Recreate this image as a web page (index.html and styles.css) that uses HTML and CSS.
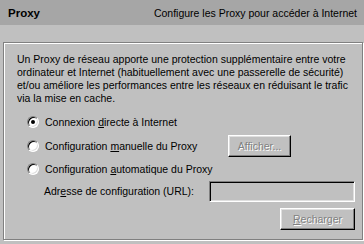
FILE: index.html
```html
<!DOCTYPE html>
<html lang="fr">
<head>
<meta charset="utf-8">
<link rel="stylesheet" href="styles.css">
</head>
<body>
<div class="page">
  <div class="header">
    <span class="title">Proxy</span>
    <span class="subtitle">Configure les Proxy pour accéder à Internet</span>
  </div>
  <div class="group">
    <p class="desc">Un Proxy de réseau apporte une protection supplémentaire entre votre<br>ordinateur et Internet (habituellement avec une passerelle de sécurité)<br>et/ou améliore les performances entre les réseaux en réduisant le trafic<br>via la mise en cache.</p>
    <div class="row row-1">
      <span class="radio checked"></span>
      <span class="label">Connexion <u>d</u>irecte à Internet</span>
    </div>
    <div class="row row-2">
      <span class="radio"></span>
      <span class="label label-fixed">Configuration <u>m</u>anuelle du Proxy</span>
      <span class="button btn-afficher">Afficher...</span>
    </div>
    <div class="row row-3">
      <span class="radio"></span>
      <span class="label">Configuration <u>a</u>utomatique du Proxy</span>
    </div>
    <div class="row row-4">
      <span class="addr-label">Adr<u>e</u>sse de configuration (URL):</span>
      <span class="textbox"></span>
    </div>
    <div class="row row-5">
      <span class="button btn-recharger"><u>R</u>echarger</span>
    </div>
  </div>
</div>
</body>
</html>
```
FILE: styles.css
```css
html, body {
  margin: 0;
  padding: 0;
}
body {
  width: 364px;
  height: 244px;
  overflow: hidden;
  background: #c0c0c0;
  font-family: "Liberation Sans", Arial, sans-serif;
  font-size: 10.5px;
  color: #000;
}
.page {
  display: flex;
  flex-direction: column;
  width: 364px;
  height: 244px;
}
.header {
  height: 25px;
  background: #a6a6a6;
  display: flex;
  align-items: center;
  justify-content: space-between;
  padding: 0 7px 0 8px;
  box-sizing: border-box;
}
.title {
  font-weight: bold;
  font-size: 11.5px;
}
.subtitle {
  font-size: 10.5px;
}
.group {
  margin: 17px 1px 0 3px;
  height: 198px;
  border: 1px solid #808080;
  box-shadow: inset 1px 1px 0 #fff, 1px 1px 0 #fff;
  box-sizing: border-box;
  display: flex;
  flex-direction: column;
}
.desc {
  margin: 10px 0 0 13px;
  line-height: 13px;
  white-space: nowrap;
}
.row {
  display: flex;
  align-items: center;
  height: 22px;
}
.row-1 { margin-top: 6px; }
.row-2 { margin-top: 2px; }
.row-3 { margin-top: 2px; height: 20px; }
.row-4 { margin-top: 1px; }
.row-5 { margin-top: 6px; justify-content: flex-end; padding-right: 7px; }
.radio {
  width: 12px;
  height: 12px;
  box-sizing: border-box;
  margin-left: 23px;
  border-radius: 50%;
  border: 1px solid;
  border-color: #808080 #fff #fff #808080;
  box-shadow: inset 1px 1px 0 #000, inset -1px -1px 0 #dfdfdf;
  background: #fff;
  display: flex;
  align-items: center;
  justify-content: center;
}
.radio.checked::after {
  content: "";
  width: 4px;
  height: 4px;
  border-radius: 50%;
  background: #000;
}
.label {
  margin-left: 6px;
  white-space: nowrap;
}
.label-fixed {
  width: 183px;
  flex: 0 0 183px;
}
.addr-label {
  margin-left: 40px;
  width: 165px;
  flex: 0 0 165px;
  white-space: nowrap;
}
.textbox {
  width: 146px;
  height: 21px;
  box-sizing: border-box;
  border: 1px solid;
  border-color: #808080 #fff #fff #808080;
  box-shadow: inset 1px 1px 0 #000, inset -1px -1px 0 #dfdfdf;
  background: #c0c0c0;
}
.button {
  height: 22px;
  box-sizing: border-box;
  border: 1px solid;
  border-color: #fff #000 #000 #fff;
  box-shadow: inset -1px -1px 0 #808080, inset 1px 1px 0 #dfdfdf;
  display: flex;
  align-items: center;
  justify-content: center;
  color: #808080;
  text-shadow: 1px 1px 0 #fff;
  white-space: nowrap;
}
.btn-afficher { width: 63px; }
.btn-recharger { width: 75px; }
```
